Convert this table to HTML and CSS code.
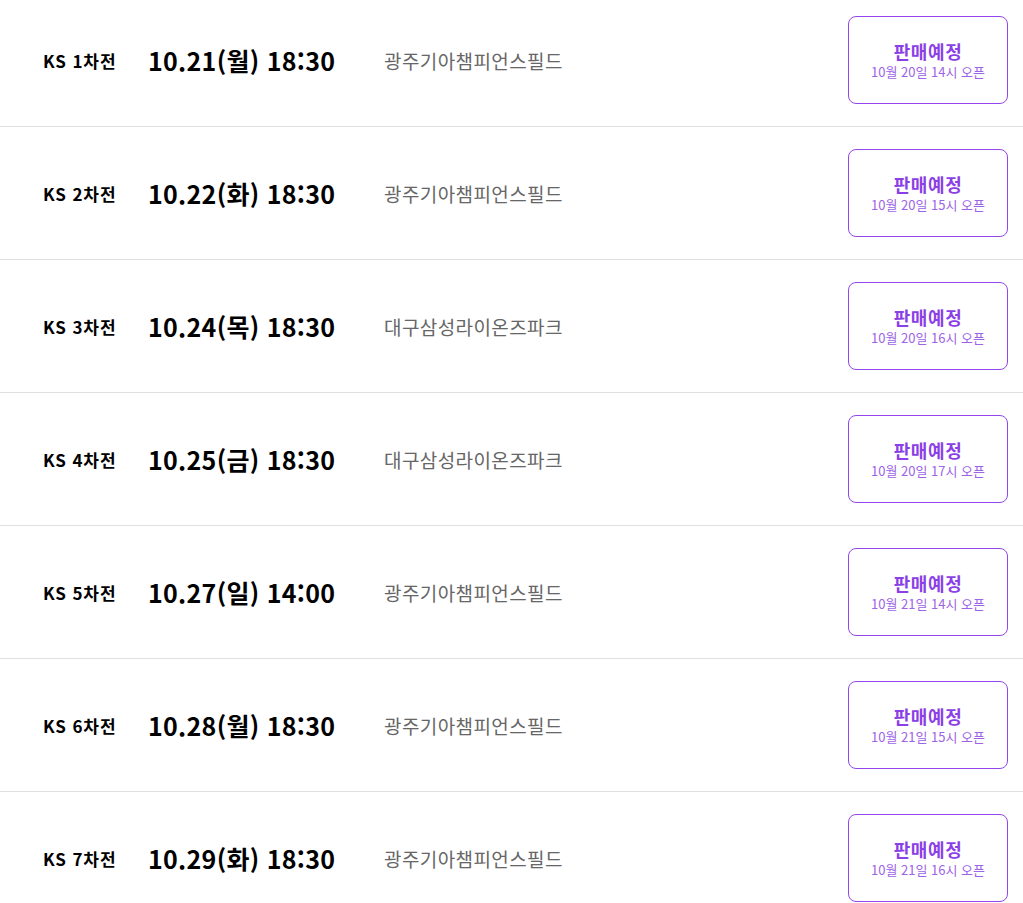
FILE: index.html
```html
<!DOCTYPE html>
<html lang="ko">
<head>
<meta charset="utf-8">
<link rel="stylesheet" href="styles.css">
</head>
<body>
<ul class="games">
  <li class="game">
    <span class="round">KS 1차전</span>
    <span class="date">10.21(월) 18:30</span>
    <span class="venue">광주기아챔피언스필드</span>
    <button class="btn"><span class="btn-title">판매예정</span><span class="btn-sub">10월 20일 14시 오픈</span></button>
  </li>
  <li class="game">
    <span class="round">KS 2차전</span>
    <span class="date">10.22(화) 18:30</span>
    <span class="venue">광주기아챔피언스필드</span>
    <button class="btn"><span class="btn-title">판매예정</span><span class="btn-sub">10월 20일 15시 오픈</span></button>
  </li>
  <li class="game">
    <span class="round">KS 3차전</span>
    <span class="date">10.24(목) 18:30</span>
    <span class="venue">대구삼성라이온즈파크</span>
    <button class="btn"><span class="btn-title">판매예정</span><span class="btn-sub">10월 20일 16시 오픈</span></button>
  </li>
  <li class="game">
    <span class="round">KS 4차전</span>
    <span class="date">10.25(금) 18:30</span>
    <span class="venue">대구삼성라이온즈파크</span>
    <button class="btn"><span class="btn-title">판매예정</span><span class="btn-sub">10월 20일 17시 오픈</span></button>
  </li>
  <li class="game">
    <span class="round">KS 5차전</span>
    <span class="date">10.27(일) 14:00</span>
    <span class="venue">광주기아챔피언스필드</span>
    <button class="btn"><span class="btn-title">판매예정</span><span class="btn-sub">10월 21일 14시 오픈</span></button>
  </li>
  <li class="game">
    <span class="round">KS 6차전</span>
    <span class="date">10.28(월) 18:30</span>
    <span class="venue">광주기아챔피언스필드</span>
    <button class="btn"><span class="btn-title">판매예정</span><span class="btn-sub">10월 21일 15시 오픈</span></button>
  </li>
  <li class="game">
    <span class="round">KS 7차전</span>
    <span class="date">10.29(화) 18:30</span>
    <span class="venue">광주기아챔피언스필드</span>
    <button class="btn"><span class="btn-title">판매예정</span><span class="btn-sub">10월 21일 16시 오픈</span></button>
  </li>
</ul>
</body>
</html>
```

FILE: styles.css
```css
html, body {
  margin: 0;
  padding: 0;
  background: #fff;
}
body {
  font-family: "Noto Sans CJK KR", "Noto Sans", sans-serif;
  color: #000;
}
.games {
  list-style: none;
  margin: 0;
  padding: 0;
}
.game {
  display: flex;
  align-items: center;
  height: 88px;
  padding: 22px 15px 22px 43px;
  border-bottom: 1px solid #e0e0e0;
}
.game:first-child {
  padding-top: 16px;
}
.round {
  width: 105px;
  font-size: 17px;
  font-weight: 700;
  letter-spacing: 0.9px;
}
.date {
  width: 236px;
  font-size: 25px;
  font-weight: 700;
  letter-spacing: 0.3px;
}
.venue {
  flex: 1;
  font-size: 19px;
  color: #666;
  letter-spacing: 0.4px;
}
.btn {
  width: 160px;
  height: 88px;
  box-sizing: border-box;
  border: 1px solid #9446ec;
  border-radius: 8px;
  background: #fff;
  display: flex;
  flex-direction: column;
  align-items: center;
  justify-content: center;
  padding: 1px 0 0;
  font-family: inherit;
  cursor: pointer;
}
.btn-title {
  font-size: 18px;
  font-weight: 700;
  color: #8b3fe6;
  line-height: 23px;
  letter-spacing: 0.6px;
}
.btn-sub {
  font-size: 13px;
  color: #9d64e6;
  line-height: 18px;
}
```
